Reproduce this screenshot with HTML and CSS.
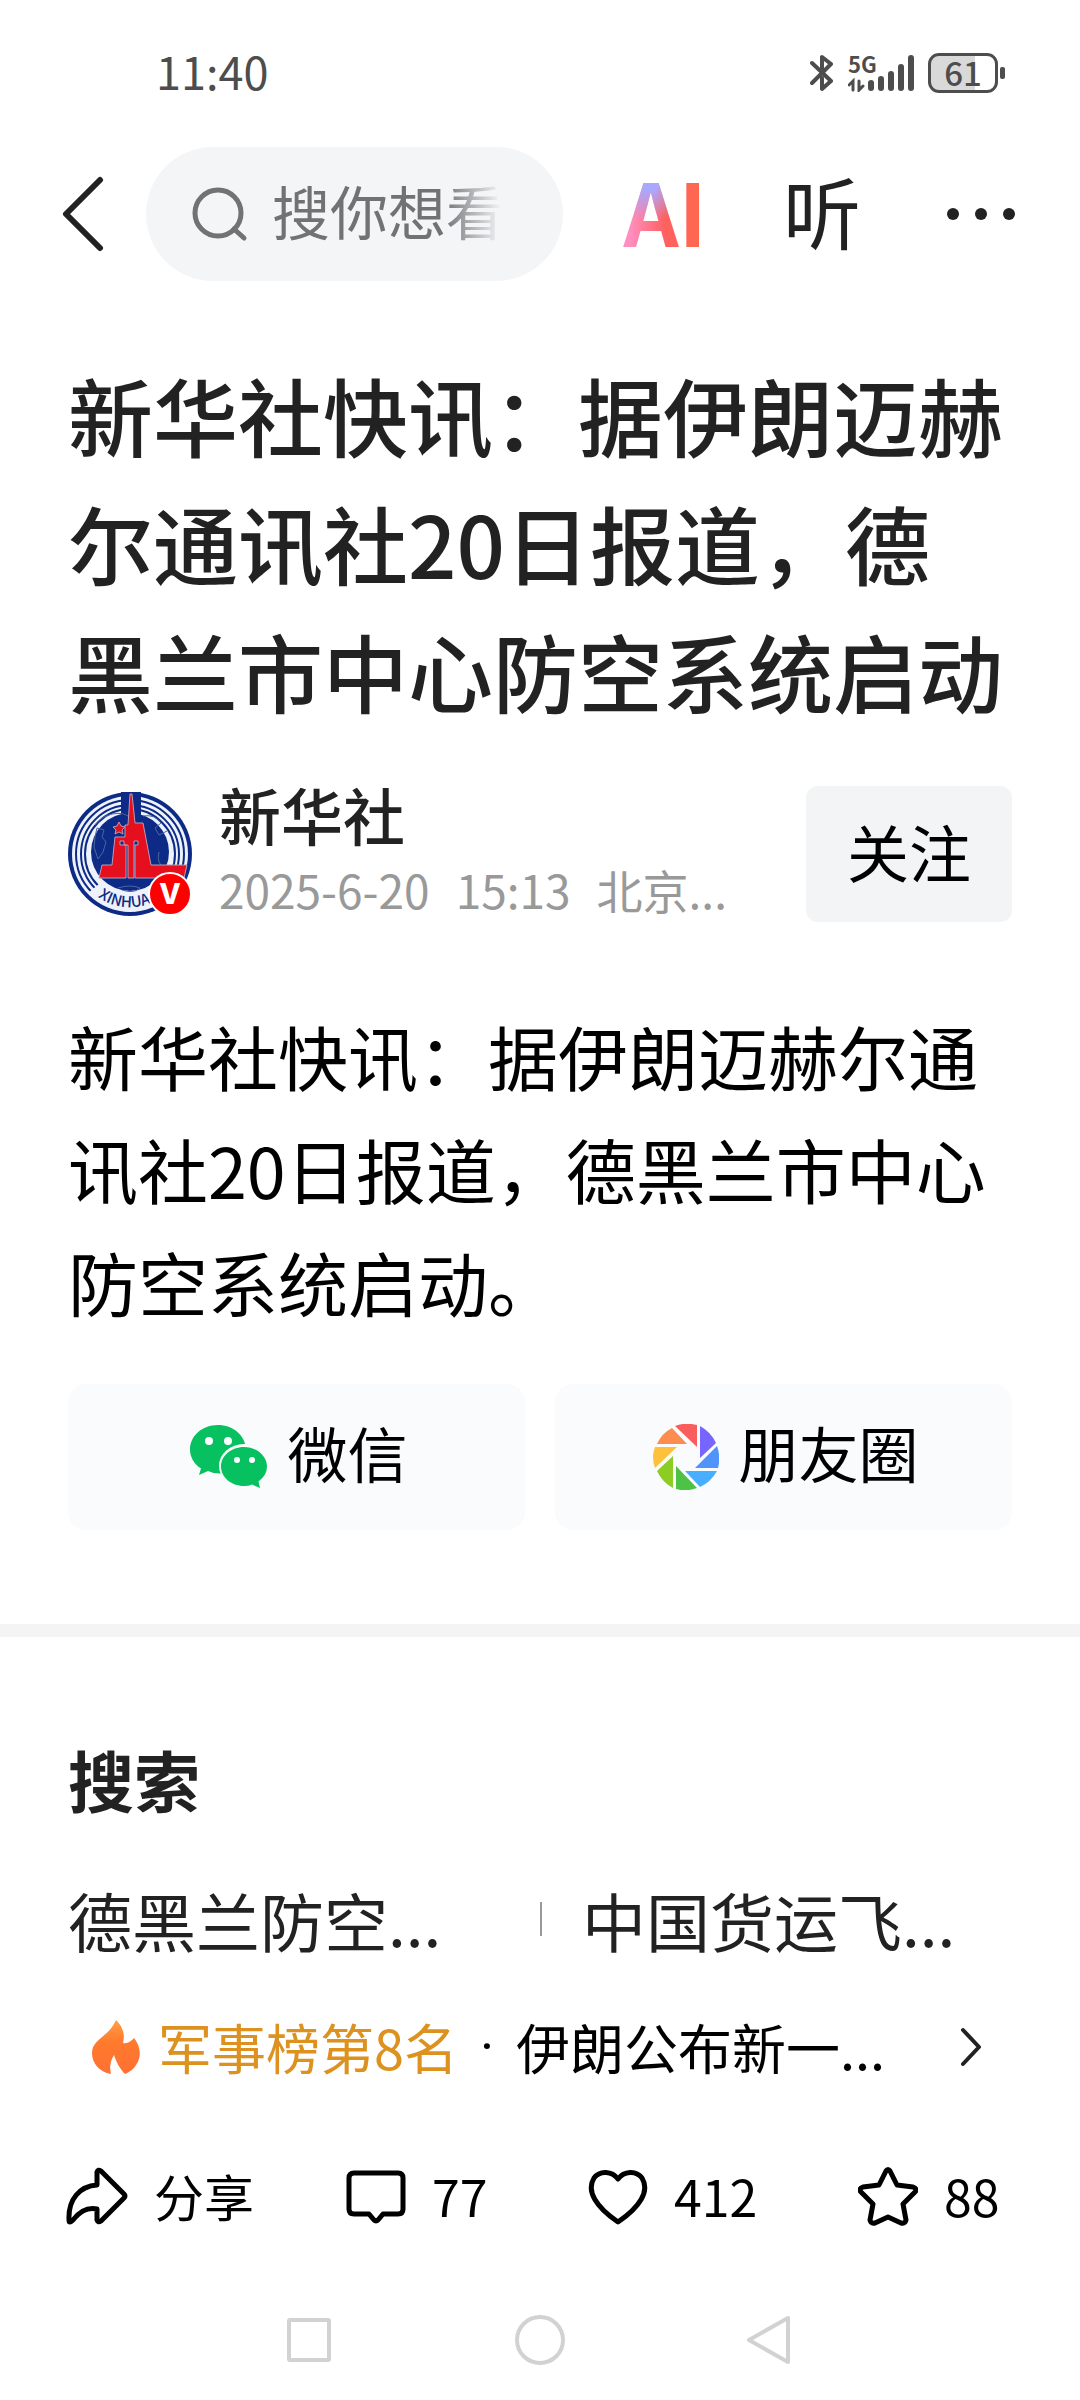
FILE: index.html
```html
<!DOCTYPE html>
<html lang="zh-CN">
<head>
    <meta charset="UTF-8">
    <meta name="viewport" content="width=device-width, initial-scale=1.0">
    <title>新华社快讯</title>
    <link rel="stylesheet" href="styles.css">
</head>
<body>
    <!-- 状态栏 -->
    <div class="status-bar">
        <span class="time">11:40</span>
        <div class="status-icons">
            <svg width="24" height="38" viewBox="0 0 24 38" fill="none" stroke="#4d4d4d" stroke-width="4" stroke-linejoin="round" stroke-linecap="round">
                <path d="M2 9L21 27L12 35V24M2 29L21 10L12 3V15"/>
            </svg>
            <div class="signal">
                <span class="net">5G</span>
                <svg width="66" height="38" viewBox="0 0 66 38" stroke="#4d4d4d" stroke-width="6" stroke-linecap="round" fill="none">
                    <path d="M23 29V34M33 25V34M43 20V34M53 13V34M63 4V34"/>
                    <path d="M5 36V27L1 31M11 27V36L15 32" stroke-width="3"/>
                </svg>
            </div>
            <div class="battery"><span>61</span></div>
        </div>
    </div>

    <!-- 顶部导航 -->
    <header class="top-nav">
        <button class="icon-btn" aria-label="返回">
            <svg width="42" height="76" viewBox="0 0 42 76" fill="none" stroke="#222" stroke-width="6" stroke-linecap="round" stroke-linejoin="round">
                <path d="M38 4L4 38L38 72"/>
            </svg>
        </button>
        <label class="search-box">
            <svg width="56" height="56" viewBox="0 0 56 56" fill="none" stroke="#707274" stroke-width="5" stroke-linecap="round">
                <circle cx="26" cy="27" r="23"/>
                <path d="M42 43L52 52"/>
            </svg>
            <input type="text" placeholder="搜你想看的" aria-label="搜索">
        </label>
        <a class="ai" href="#">AI</a>
        <button class="listen">听</button>
        <button class="icon-btn" aria-label="更多">
            <svg width="70" height="14" viewBox="0 0 70 14" fill="#222">
                <circle cx="7" cy="7" r="6"/>
                <circle cx="35" cy="7" r="6"/>
                <circle cx="63" cy="7" r="6"/>
            </svg>
        </button>
    </header>

    <!-- 正文 -->
    <article class="article">
        <h1>新华社快讯：据伊朗迈赫尔通讯社20日报道，德黑兰市中心防空系统启动</h1>

        <div class="author">
            <div class="avatar">
                <svg width="124" height="124" viewBox="0 0 124 124">
                    <circle cx="62" cy="62" r="62" fill="#0d2b86"/>
                    <circle cx="62" cy="62" r="58" fill="#eef2fa"/>
                    <g fill="none" stroke="#0d2b86" stroke-width="2">
                        <circle cx="62" cy="62" r="54"/>
                        <circle cx="62" cy="62" r="49"/>
                        <circle cx="62" cy="62" r="45"/>
                    </g>
                    <path d="M31 92Q62 112 93 92L104 101Q62 138 20 101Z" fill="#eef2fa"/>
                    <circle cx="62" cy="60" r="39" fill="#0d2b86"/>
                    <path d="M53 0H73V30H53Z" fill="#0d2b86"/>
                    <g fill="none" stroke="#4d659f" stroke-width="1">
                        <path d="M27 33Q34 24 44 22Q54 20 60 24M29 36L36 38L34 45L38 50L35 60L30 67L26 55L27 45ZM75 24Q87 22 93 31L87 36L91 43L99 39M91 60Q88 72 97 76M50 96Q62 92 72 96Q66 102 54 98"/>
                    </g>
                    <path d="M62 2H64L67 31H75L83 73H119L116 86H67V53H70V49H66V86H60V53H56V49H52V53H58V86H31L34 73H44L47 45H57V33H60Z" fill="#e60f1e" stroke="#b99bb4" stroke-width="1"/>
                    <path d="M51 30L53 34L57 35L54 38L55 42L51 40L47 42L48 38L45 35L49 34Z" fill="#e60f1e" stroke="#b99bb4" stroke-width="1"/>
                    <path id="arc" d="M30 105A53 53 0 0 0 104 94" fill="none"/>
                    <text class="logo-text"><textPath href="#arc">XINHUA</textPath></text>
                </svg>
                <span class="badge">V</span>
            </div>
            <div class="author-info">
                <div class="name">新华社</div>
                <div class="meta"><span>2025-6-20</span><span>15:13</span><span>北京...</span></div>
            </div>
            <button class="follow">关注</button>
        </div>

        <p class="content">新华社快讯：据伊朗迈赫尔通讯社20日报道，德黑兰市中心防空系统启动。</p>

        <div class="share">
            <button>
                <svg width="78" height="64" viewBox="0 0 78 64">
                    <path d="M28 0C12 0 0 11 0 24.500C0 32 4 39 11 43.500L9 50L18 46Q23 48.500 30 48.500Q56 45 56 24C55 10 43 0 28 0Z" fill="#07c160"/>
                    <ellipse cx="54" cy="41" rx="25" ry="22" fill="#fafbfd"/>
                    <path d="M54 22C41 22 31 31 31 41.500C31 52 41 61 54 61Q59 61 62 59.500L70 63L68.500 56.500Q77 50 77 41.500C77 31 67 22 54 22Z" fill="#07c160"/>
                    <g fill="#fff">
                        <circle cx="19" cy="16" r="4"/>
                        <circle cx="38" cy="16" r="4"/>
                        <circle cx="47" cy="35" r="3"/>
                        <circle cx="62" cy="35" r="3"/>
                    </g>
                </svg>
                <span>微信</span>
            </button>
            <button>
                <svg width="66" height="66" viewBox="0 0 66 66">
                    <path d="M22 2Q32 -2 44 1V23Z" fill="#fa5d5d"/>
                    <path d="M47 2Q58 8 63 19L47 34Z" fill="#7864ff"/>
                    <path d="M64 22Q68 33 65 44H42Z" fill="#5093fa"/>
                    <path d="M64 47Q58 58 47 63L32 47Z" fill="#4aaeff"/>
                    <path d="M44 64Q33 68 23 65V42Z" fill="#4dc244"/>
                    <path d="M20 64Q9 58 4 47L20 32Z" fill="#8dcb25"/>
                    <path d="M2 44Q-2 33 2 23H24Z" fill="#fdc13c"/>
                    <path d="M4 20Q9 9 19 4L34 20Z" fill="#fc8c50"/>
                </svg>
                <span>朋友圈</span>
            </button>
        </div>
    </article>

    <!-- 搜索推荐 -->
    <section class="related">
        <h2>搜索</h2>
        <div class="keywords">
            <a href="#">德黑兰防空...</a>
            <a href="#">中国货运飞...</a>
        </div>
        <a class="hot" href="#">
            <svg width="48" height="58" viewBox="0 0 48 58">
                <defs>
                    <linearGradient id="fire" x1="0" y1="0" x2="0" y2="1">
                        <stop offset="0" stop-color="#ffa04a"/>
                        <stop offset="0.400" stop-color="#ff7a2c"/>
                        <stop offset="1" stop-color="#ff7034"/>
                    </linearGradient>
                </defs>
                <path d="M24 2C28 6 34 13 31 25C36 26 39 23 42 20C47 26 49 34 47 41C44 50 38 54 33 56C29 52 25 46 22 37C19 42 17 48 19 56C7 54 0 45 0 35C0 21 17 19 24 2Z" fill="url(#fire)"/>
            </svg>
            <span class="rank">军事榜第8名</span>
            <span class="dot">·</span>
            <span class="hot-title">伊朗公布新一...</span>
            <svg width="22" height="40" viewBox="0 0 22 40" fill="none" stroke="#222" stroke-width="4" stroke-linecap="round" stroke-linejoin="round">
                <path d="M3 3L19 20L3 37"/>
            </svg>
        </a>
    </section>

    <!-- 底部操作栏 -->
    <footer class="actions">
        <button>
            <svg width="62" height="60" viewBox="0 0 62 60">
                <path d="M31 5Q32 2 35 4L58 27Q60 29 58 31L35 54Q32 56 31 53V42C21 40 14 44 7 53Q3 57 3 53C2 32 14 19 31 18Z"/>
            </svg>
            <span>分享</span>
        </button>
        <button>
            <svg width="60" height="60" viewBox="0 0 60 60">
                <path d="M8 6H52Q57 6 57 11V42Q57 47 52 47H37L32 53Q30 55 28 53L23 47H8Q3 47 3 42V11Q3 6 8 6Z"/>
            </svg>
            <span>77</span>
        </button>
        <button>
            <svg width="60" height="60" viewBox="0 0 60 60">
                <path d="M30 12C24 4 12 3 6 11C-2 24 8 40 30 55C52 40 62 24 54 11C48 3 36 4 30 12Z"/>
            </svg>
            <span>412</span>
        </button>
        <button>
            <svg width="60" height="60" viewBox="0 0 60 60">
                <path d="M28 4Q30 1 32 4L39 18L55 20Q60 22 57 25L45 37L48 53Q47 57 43 56L30 50L17 56Q13 57 12 53L15 37L3 25Q0 22 5 20L21 18Z"/>
            </svg>
            <span>88</span>
        </button>
    </footer>

    <!-- 系统导航键 -->
    <nav class="sys-nav">
        <button aria-label="最近任务">
            <svg width="50" height="50" viewBox="0 0 50 50"><rect x="5" y="5" width="40" height="40" rx="1"/></svg>
        </button>
        <button aria-label="主页">
            <svg width="50" height="50" viewBox="0 0 50 50"><circle cx="25" cy="25" r="23"/></svg>
        </button>
        <button aria-label="返回">
            <svg width="50" height="50" viewBox="0 0 50 50"><path d="M42 3V47L3 25Z"/></svg>
        </button>
    </nav>
</body>
</html>
```
FILE: styles.css
```css
* {
    box-sizing: border-box;
}
body {
    margin: 0;
    background: #fff;
    color: #222;
    font-family: "Noto Sans CJK SC", sans-serif;
}
button {
    margin: 0;
    padding: 0;
    border: none;
    background: none;
    color: inherit;
    font-family: inherit;
    cursor: pointer;
}
a {
    color: inherit;
    text-decoration: none;
}
svg {
    display: block;
    flex-shrink: 0;
}

/* 状态栏 */
.status-bar {
    display: flex;
    justify-content: space-between;
    align-items: center;
    height: 146px;
    padding: 0 82px 0 156px;
    color: #4d4d4d;
}
.time {
    padding-bottom: 4px;
    font-size: 45px;
    line-height: 60px;
}
.status-icons {
    display: flex;
    align-items: center;
    gap: 14px;
}
.signal {
    position: relative;
}
.net {
    position: absolute;
    top: 0;
    left: 0;
    font-size: 22px;
    font-weight: 700;
    line-height: 18px;
}
.battery {
    position: relative;
    width: 70px;
    height: 40px;
    border: 3px solid #4d4d4d;
    border-radius: 11px;
    background: linear-gradient(90deg, #d9d9d9 68%, #fff 68%);
    font-size: 33px;
    font-weight: 500;
    line-height: 32px;
    text-align: center;
}
.battery::after {
    content: "";
    position: absolute;
    right: -10px;
    top: 11px;
    width: 5px;
    height: 12px;
    border-radius: 2px;
    background: #4d4d4d;
}

/* 顶部导航 */
.top-nav {
    display: flex;
    align-items: center;
    height: 136px;
    padding: 0 64px 0 62px;
}
.search-box {
    display: flex;
    flex: 1;
    align-items: center;
    min-width: 0;
    height: 134px;
    margin: 0 60px 0 42px;
    padding: 0 62px 0 46px;
    border-radius: 67px;
    background: #f3f5f7;
}
.search-box input {
    flex: 1;
    min-width: 0;
    height: 94px;
    margin-left: 24px;
    padding: 0 0 8px;
    border: none;
    outline: none;
    background: none;
    font-family: inherit;
    font-size: 58px;
    -webkit-mask-image: linear-gradient(90deg, #000 75%, transparent);
    mask-image: linear-gradient(90deg, #000 75%, transparent);
}
.search-box input::placeholder {
    color: #707274;
}
.ai {
    padding-bottom: 8px;
    background: radial-gradient(circle at 30% 25%, #a9a8ff 8%, transparent 35%), linear-gradient(90deg, #ff8fc0 8%, #ff6060 50%, #ff6a4a);
    -webkit-background-clip: text;
    background-clip: text;
    color: transparent;
    font-size: 86px;
    font-weight: 700;
    line-height: 120px;
}
.listen {
    margin: 0 85px 0 76px;
    padding-bottom: 8px;
    font-size: 78px;
    line-height: 120px;
}

/* 正文 */
.article {
    padding: 68px 68px 94px;
}
h1 {
    margin: 0;
    font-size: 85px;
    font-weight: 500;
    line-height: 128px;
}
.author {
    display: flex;
    align-items: center;
    margin-top: 45px;
}
.avatar {
    position: relative;
}
.logo-text {
    fill: #0d2b86;
    font-size: 15px;
    font-weight: 500;
}
.badge {
    position: absolute;
    right: 0;
    bottom: 0;
    width: 44px;
    height: 44px;
    border: 2px solid #fff;
    border-radius: 50%;
    background: #f00;
    color: #fff;
    font-family: Inter, sans-serif;
    font-size: 28px;
    font-weight: 800;
    line-height: 40px;
    text-align: center;
}
.author-info {
    flex: 1;
    margin-left: 27px;
}
.name {
    font-size: 62px;
    font-weight: 500;
    line-height: 70px;
}
.meta {
    display: flex;
    gap: 26px;
    color: #999;
    font-size: 46px;
    line-height: 80px;
}
.follow {
    width: 206px;
    height: 136px;
    padding-bottom: 6px;
    border-radius: 12px;
    background: #f3f4f6;
    color: #000;
    font-size: 62px;
}
.content {
    margin: 70px 0 0;
    color: #000;
    font-size: 70px;
    line-height: 113px;
}
.share {
    display: grid;
    grid-template-columns: 1fr 1fr;
    gap: 30px;
    margin-top: 46px;
}
.share button {
    display: flex;
    justify-content: center;
    align-items: center;
    gap: 20px;
    height: 146px;
    padding-left: 4px;
    border-radius: 18px;
    background: #fafbfd;
    color: #000;
    font-size: 60px;
}
.share span {
    padding-bottom: 12px;
}

/* 搜索推荐 */
.related {
    padding: 92px 68px 0;
    border-top: 13px solid #f4f4f5;
}
h2 {
    margin: 0;
    font-size: 66px;
    font-weight: 700;
    line-height: 98px;
}
.keywords {
    display: grid;
    grid-template-columns: 1fr 1fr;
    margin-top: 46px;
    font-size: 64px;
    line-height: 92px;
}
.keywords a {
    display: flex;
    align-items: center;
}
.keywords a + a::before {
    content: "";
    width: 2px;
    height: 34px;
    margin-right: 40px;
    background: #999;
}
.hot {
    display: flex;
    align-items: center;
    margin-top: 36px;
    padding: 0 30px 0 24px;
    color: #000;
    font-size: 54px;
    line-height: 92px;
}
.rank {
    margin-left: 18px;
    color: #dd921f;
}
.dot {
    width: 58px;
    font-family: Roboto, sans-serif;
    text-align: center;
}
.hot-title {
    flex: 1;
}

/* 底部操作栏 */
.actions {
    display: grid;
    grid-template-columns: 280fr 242fr 270fr 144fr;
    padding: 62px 78px 0 66px;
    color: #000;
}
.actions button {
    display: flex;
    align-items: center;
    gap: 26px;
    font-size: 50px;
    line-height: 80px;
}
.actions span {
    padding-bottom: 4px;
}
.actions svg {
    fill: none;
    stroke: #000;
    stroke-width: 5;
    stroke-linejoin: round;
}

/* 系统导航键 */
.sys-nav {
    display: flex;
    justify-content: space-between;
    padding: 76px 284px 34px;
}
.sys-nav svg {
    fill: none;
    stroke: #d2d2d2;
    stroke-width: 4;
    stroke-linejoin: round;
}
```
